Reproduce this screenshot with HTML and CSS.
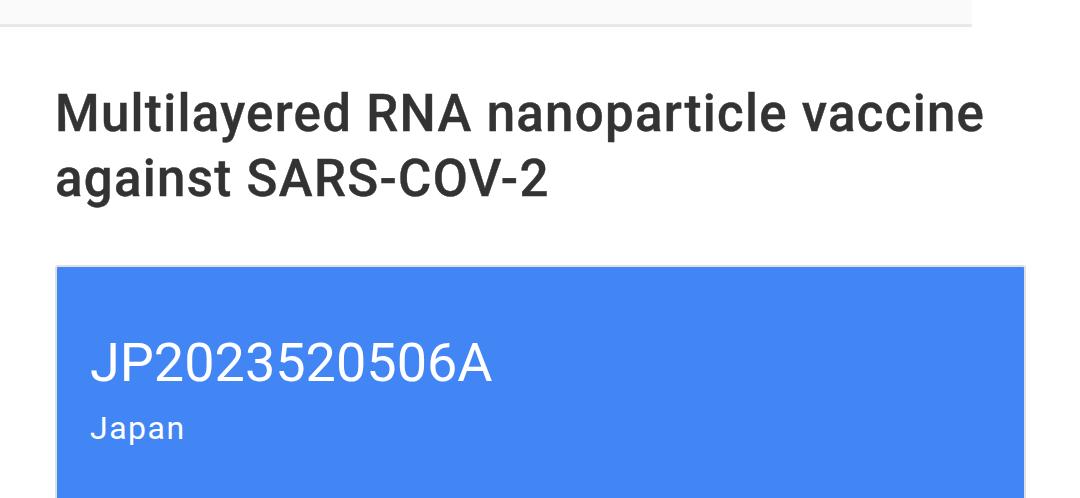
FILE: index.html
```html
<!DOCTYPE html>
<html lang="en">
<head>
  <meta charset="UTF-8">
  <title>Multilayered RNA nanoparticle vaccine against SARS-COV-2</title>
  <link rel="stylesheet" href="styles.css">
</head>
<body>

<div class="topbar"></div>

<div class="content">
  <h1 class="title">Multilayered RNA nanoparticle vaccine against SARS-COV-2</h1>

  <div class="patent-card">
    <div class="patent-number">JP2023520506A</div>
    <div class="patent-country">Japan</div>
  </div>
</div>

</body>
</html>
```
FILE: styles.css
```css
body {
  margin: 0;
  font-family: Roboto, "Liberation Sans", sans-serif;
  background: #ffffff;
  color: #333333;
  overflow: hidden;
}

.topbar {
  width: 972px;
  height: 24px;
  background: #fafafa;
  border-bottom: 3px solid #e8e8e8;
}

.content {
  padding: 0 54px 0 55px;
}

.title {
  margin: 54px 0 0;
  font-size: 51px;
  font-weight: 500;
  line-height: 65px;
  letter-spacing: 1.3px;
  color: #333333;
  -webkit-text-stroke: 0.4px #333333;
}

.patent-card {
  margin-top: 54px;
  background: #4285f4;
  border: 2px solid #e0e0e0;
  border-radius: 3px;
  padding: 63px 33px 60px;
  color: #ffffff;
}

.patent-number {
  font-size: 54px;
  line-height: 65px;
}

.patent-country {
  margin-top: 13px;
  font-size: 32px;
  line-height: 40px;
  letter-spacing: 1.5px;
}
```
